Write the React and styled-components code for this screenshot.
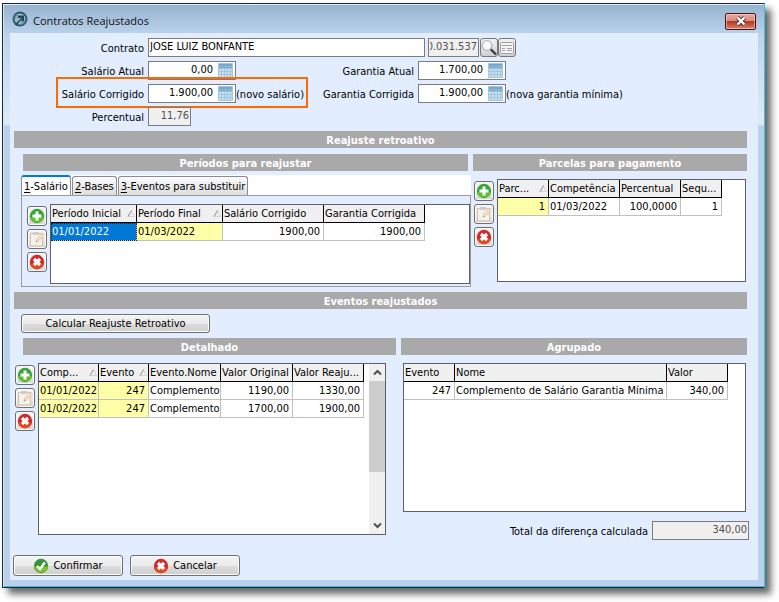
import React from "react";
import styled, { createGlobalStyle, css } from "styled-components";

const Global = createGlobalStyle`
  *, *::before, *::after { box-sizing: border-box; }
  body { margin: 0; background: #fff; }
  body, button, input, table {
    font-family: "DejaVu Sans Condensed", "DejaVu Sans", sans-serif;
    font-size: 11px;
    line-height: 14px;
    color: #000;
  }
`;

const Page = styled.div`
  min-height: 100vh;
  padding: 3px 14px 14px 2px;
  display: flex;
`;

const Window = styled.main`
  flex: 1;
  min-width: 0;
  display: flex;
  flex-direction: column;
  border: 1px solid #23262e;
  border-right-color: #2fc8ea;
  background: linear-gradient(#98b4d0 0, #bdd3eb 30px, #dfebf7 120px, #b9d1ea 122px);
  box-shadow: 6px 6px 7px rgba(0, 0, 0, 0.6), inset 0 1px 0 #d8f4fb, inset 1px 0 0 #c4eefb, inset 0 -1px 0 #2fc8ea;
  padding: 1px 6px 7px 7px;
`;

const TitleBar = styled.header`
  height: 28px;
  margin: 0 -6px 0 -6px;
  padding: 0 8px 0 8px;
  display: flex;
  align-items: center;
  gap: 5px;
  background: linear-gradient(#98b4d0, #b9d1ea);
`;

const Title = styled.h1`
  flex: 1;
  margin: 0;
  padding-top: 4px;
  font: 11px/18px "Open Sans", "Noto Sans", sans-serif;
  color: #111;
`;

const CloseButton = styled.button`
  width: 31px;
  height: 17px;
  padding: 0;
  margin-top: 4px;
  display: grid;
  place-items: center;
  border: 1px solid #43151c;
  border-radius: 2px;
  background: linear-gradient(#e9a99f 0%, #d98a7d 45%, #b83a24 50%, #c9604b 80%, #dc8f7c 100%);
  box-shadow: inset 0 0 0 1px rgba(255, 220, 210, 0.5);
`;

const Body = styled.div`
  flex: 1;
  padding: 5px 11px 4px 4px;
  background: #e2eeff;
`;

const Form = styled.form`
  margin: 0 0 5px -4px;
  display: flex;
  flex-direction: column;
  gap: 4px;
`;

const FormRow = styled.div`
  display: flex;
  gap: ${(p) => p.$gap || "0"};
`;

const Field = styled.div`
  position: relative;
  display: flex;
  align-items: center;
  width: ${(p) => (p.$wide ? "auto" : "304px")};
  white-space: nowrap;
  ${(p) =>
    p.$highlight &&
    css`
      &::after {
        content: "";
        position: absolute;
        inset: -7px 6px -5px 46px;
        border: 2px solid #ff6a00;
        pointer-events: none;
      }
    `}
`;

const Label = styled.label`
  width: ${(p) => p.$width};
  margin-right: 4px;
  padding-top: 2px;
  text-align: right;
`;

const Note = styled.span`
  padding-top: 2px;
`;

const TextBox = styled.input`
  width: ${(p) => p.$width};
  height: 19px;
  padding: 0 ${(p) => (p.$calc ? "22px" : "1px")} 2px 1px;
  border: 1px solid #7b7b80;
  border-radius: 0;
  outline: 0;
  background: #fff;
  text-align: ${(p) => (p.$number ? "right" : "left")};
  ${(p) => p.$clipStart && "direction: rtl; text-align: left;"}
  &:read-only {
    background: #f0f0f0;
    color: #505050;
  }
`;

const MoneyWrap = styled.span`
  position: relative;
  display: flex;
`;

const CalcMark = styled.svg`
  position: absolute;
  top: 2px;
  right: 3px;
`;

const LookupButton = styled.button`
  width: 18px;
  height: 19px;
  margin-left: ${(p) => (p.$first ? "1px" : "0")};
  padding: 0;
  display: grid;
  place-items: center;
  border: 1px solid #777;
  border-radius: 3px;
  background: linear-gradient(#f2f2f2, #e2e2e2 50%, #cfcfcf);
`;

const Bar = styled.h2`
  margin: ${(p) => p.$margin || "0"};
  height: 17px;
  background: #a9a9a9;
  color: #fff;
  font-size: 11px;
  line-height: 20px;
  font-weight: bold;
  text-align: center;
`;

const Columns = styled.div`
  display: grid;
  grid-template-columns: ${(p) => p.$columns};
  column-gap: 5px;
`;

const Panel = styled.section`
  min-width: 0;
  display: flex;
  flex-direction: column;
`;

const TabsBox = styled.div`
  margin: 4px -3px 0 7px;
`;

const TabList = styled.div`
  height: 20px;
  display: flex;
  align-items: flex-end;
  gap: 1px;
  background: #fff;
`;

const Tab = styled.button`
  height: 19px;
  padding: 1px 2px 0;
  white-space: nowrap;
  border: 1px solid #898c95;
  border-bottom: 0;
  border-radius: 3px 3px 0 0;
  background: linear-gradient(#fcfcfc, #ececec 50%, #dddddd);
  ${(p) =>
    p.$active &&
    css`
      height: 20px;
      border-top: 2px solid #0078d7;
      background: #fff;
    `}
  u {
    text-underline-offset: 2px;
  }
`;

const TabPanel = styled.div`
  height: 92px;
  padding: 8px 0 2px 5px;
  border: 1px solid #9a9a9a;
`;

const Workspace = styled.div`
  height: 100%;
  display: flex;
  gap: 3px;
`;

const Spaced = styled.div`
  height: ${(p) => p.$height};
  margin: 8px ${(p) => p.$right || "1px"} 0 ${(p) => p.$left || "1px"};
`;

const Tools = styled.div`
  padding-top: 2px;
  display: flex;
  flex-direction: column;
  gap: 3px;
`;

const ToolButton = styled.button`
  width: 20px;
  height: 20px;
  padding: 0;
  display: grid;
  place-items: center;
  border: 1px solid #6f6f6f;
  border-radius: 3px;
  background: linear-gradient(#f4f4f4, #ebebeb 50%, #d4d4d4);
  box-shadow: inset 0 0 0 1px #fafafa;
`;

const GridBox = styled.div`
  flex: 1;
  min-width: 0;
  height: 100%;
  display: flex;
  justify-content: space-between;
  overflow: hidden;
  border: 1px solid #5f6066;
  background: #fff;
`;

const Table = styled.table`
  align-self: flex-start;
  width: ${(p) => p.$width}px;
  flex: none;
  table-layout: fixed;
  border-collapse: separate;
  border-spacing: 0;
`;

const Th = styled.th`
  height: 18px;
  padding: 0 0 0 1px;
  border-right: 1px solid #000;
  border-bottom: 1px solid #000;
  background: #f0f0f0;
  font-weight: normal;
  text-align: left;
  white-space: nowrap;
  overflow: hidden;
`;

const HeadLine = styled.span`
  display: flex;
  align-items: center;
  justify-content: space-between;
`;

const Td = styled.td`
  height: 18px;
  padding: 0 ${(p) => (p.$right ? "3px" : "0")} 0 1px;
  border-right: 1px solid #c0c0c0;
  border-bottom: 1px solid #c0c0c0;
  background: ${(p) => (p.$key ? "#ffffa8" : "#fff")};
  text-align: ${(p) => (p.$right ? "right" : "left")};
  white-space: nowrap;
  overflow: hidden;
  ${(p) =>
    p.$selected &&
    css`
      background: #0078d7;
      color: #fff;
      outline: 1px dotted #10253c;
      outline-offset: -1px;
    `}
`;

const ScrollBar = styled.div`
  width: 16px;
  display: flex;
  flex-direction: column;
  background: #f0f0f0;
`;

const ScrollArrow = styled.button`
  height: 17px;
  padding: 0;
  display: grid;
  place-items: center;
  border: 0;
  background: #f0f0f0;
`;

const ScrollThumb = styled.div`
  height: 91px;
  margin-bottom: auto;
  background: #cdcdcd;
`;

const PushButton = styled.button`
  width: ${(p) => p.$width};
  height: ${(p) => p.$height};
  padding: 0;
  display: flex;
  align-items: center;
  justify-content: center;
  gap: 4px;
  border: 1px solid #707070;
  border-radius: 3px;
  background: linear-gradient(#f3f3f3, #ebebeb 50%, #dcdcdc 51%, #cfcfcf);
  box-shadow: inset 0 0 0 1px #fbfbfb;
`;

const CalcRow = styled.div`
  margin-left: 7px;
`;

const TotalRow = styled.div`
  margin: 9px -2px 0 0;
  display: flex;
  justify-content: flex-end;
  align-items: center;
`;

const Footer = styled.footer`
  margin: 15px 0 0 -1px;
  display: flex;
  gap: 7px;
`;

const AppIcon = () => (
  <svg width="16" height="16" viewBox="0 0 16 16" aria-hidden="true">
    <circle cx="8" cy="8" r="6.5" fill="#9dbccb" stroke="#2c5a6c" strokeWidth="2" />
    <path d="M3 8a5 5 0 0 1 3-4.500M13 8.500A5 5 0 0 1 9 13" fill="none" stroke="#5f93a5" strokeWidth="1.500" />
    <path d="M2.500 13.500 9 7H5.500L6.500 4.500H12V10l-2.300 1V8.500L4.500 14.500Z" fill="#1d4354" />
    <path d="m4 12.500 6-6" stroke="#7fabb9" strokeWidth=".6" />
  </svg>
);

const CloseIcon = () => (
  <svg width="12" height="10" viewBox="0 0 12 10" aria-hidden="true">
    <path d="M2.500 1.500 9.500 8.500M9.500 1.500 2.500 8.500" stroke="#4a3540" strokeWidth="4" />
    <path d="M2.500 1.500 9.500 8.500M9.500 1.500 2.500 8.500" stroke="#fff" strokeWidth="2.300" />
  </svg>
);

const CalcIcon = () => (
  <CalcMark width="15" height="15" viewBox="0 0 15 15" aria-hidden="true">
    <rect width="15" height="15" rx="1" fill="#a3c6e0" />
    <rect x="1" y="1" width="13" height="4" fill="#77a6cc" />
    <path d="M1 3.500h13" stroke="#93bbdb" />
    <g fill="#c9e0f0">
      {[6, 9, 12].map((y) =>
        [1, 4, 7, 10, 13].map((x) => <rect key={`${x}-${y}`} x={x} y={y} width={x === 13 ? 1 : 2} height="2" />)
      )}
    </g>
  </CalcMark>
);

const LensIcon = () => (
  <svg width="16" height="17" viewBox="0 0 16 17" aria-hidden="true">
    <path d="m9.500 10 5.500 5.500" stroke="#3c3c3c" strokeWidth="2.400" />
    <circle cx="6" cy="6.500" r="4.800" fill="#f7fafc" stroke="#b4b8bc" strokeWidth="1.300" />
    <path d="M3.500 5.500a3 3 0 0 1 3-2.300" fill="none" stroke="#fff" strokeWidth="1.500" />
  </svg>
);

const CardIcon = () => (
  <svg width="16" height="15" viewBox="0 0 16 15" aria-hidden="true">
    <rect x="1.500" y="2.500" width="13" height="11" rx="1" fill="#f4f4f4" stroke="#a0a0a0" />
    <path d="M3 5.500h10M3 8.500h3M3 10.500h3M8 8.500h5M8 10.500h5" stroke="#a2a2a2" />
  </svg>
);

const AddIcon = () => (
  <svg width="16" height="16" viewBox="0 0 16 16" aria-hidden="true">
    <circle cx="8" cy="8" r="7.200" fill="#35a336" />
    <path d="M1 9a7.200 7.200 0 0 0 14 0Z" fill="#62bd2c" />
    <path d="M8 3.500v9M3.500 8h9" stroke="#fff" strokeWidth="3" />
  </svg>
);

const EditIcon = () => (
  <svg width="16" height="16" viewBox="0 0 16 16" aria-hidden="true">
    <rect x="1.500" y="2.500" width="12" height="12.500" fill="#f4f2ec" stroke="#d8c19c" />
    <rect x="4" y="1" width="6" height="3" fill="#cdcdcd" />
    <path d="m7 11 1-3 5.500-6 1.800 1.800-5.500 6Z" fill="#f9e2c2" stroke="#d3b896" strokeWidth=".7" />
    <path d="m7 11 .4-1.300 1 1Z" fill="#777" />
  </svg>
);

const DeleteIcon = () => (
  <svg width="16" height="16" viewBox="0 0 16 16" aria-hidden="true">
    <circle cx="8" cy="8" r="7.200" fill="#d22a2c" />
    <path d="M1.100 10a7.200 7.200 0 0 0 13.800 0Z" fill="#e3481f" />
    <path d="m5 5 6 6M11 5l-6 6" stroke="#fff" strokeWidth="3.200" />
  </svg>
);

const CheckIcon = () => (
  <svg width="16" height="16" viewBox="0 0 16 16" aria-hidden="true">
    <circle cx="8" cy="8" r="7.200" fill="#35933c" />
    <path d="M.900 8.500a7.200 7.200 0 0 0 14.200 0Z" fill="#7cc226" />
    <path d="m4 8 3 3.200L11.800 4.500" fill="none" stroke="#fff" strokeWidth="2.400" />
  </svg>
);

const SortIcon = () => (
  <svg width="9" height="8" viewBox="0 0 9 8" aria-hidden="true">
    <path d="M4.500 1 7.500 6.500H1" fill="none" stroke="#d4d4d4" />
    <path d="M1 6.500 4.500.5" fill="none" stroke="#8a8a8a" />
  </svg>
);

const Chevron = ({ down }) => (
  <svg width="9" height="7" viewBox="0 0 9 7" aria-hidden="true">
    <path d={down ? "M1 1.500 4.500 5 8 1.500" : "M1 5.500 4.500 2 8 5.500"} fill="none" stroke="#505050" strokeWidth="2" />
  </svg>
);

function MoneyField({ id, label, labelWidth, value, note, highlight, wide }) {
  return (
    <Field $highlight={highlight} $wide={wide}>
      <Label htmlFor={id} $width={labelWidth}>{label}</Label>
      <MoneyWrap>
        <TextBox id={id} defaultValue={value} $width="88px" $calc $number />
        <CalcIcon />
      </MoneyWrap>
      {note && <Note>{note}</Note>}
    </Field>
  );
}

function EditTools() {
  return (
    <Tools>
      <ToolButton type="button" aria-label="Incluir"><AddIcon /></ToolButton>
      <ToolButton type="button" aria-label="Editar"><EditIcon /></ToolButton>
      <ToolButton type="button" aria-label="Excluir"><DeleteIcon /></ToolButton>
    </Tools>
  );
}

function DataGrid({ label, columns, rows, selectFirst, scroll }) {
  const total = columns.reduce((sum, c) => sum + c.width, 0);
  return (
    <GridBox>
      <Table $width={total} aria-label={label}>
        <colgroup>
          {columns.map((c) => <col key={c.name} width={c.width} />)}
        </colgroup>
        <thead>
          <tr>
            {columns.map((c) => (
              <Th key={c.name} scope="col">
                {c.sorted ? <HeadLine>{c.name}<SortIcon /></HeadLine> : c.name}
              </Th>
            ))}
          </tr>
        </thead>
        <tbody>
          {rows.map((row, r) => (
            <tr key={r}>
              {row.map((cell, i) => (
                <Td key={i} $key={columns[i].sorted} $right={columns[i].right} $selected={selectFirst && r === 0 && i === 0}>
                  {cell}
                </Td>
              ))}
            </tr>
          ))}
        </tbody>
      </Table>
      {scroll && (
        <ScrollBar>
          <ScrollArrow type="button" aria-label="Subir"><Chevron /></ScrollArrow>
          <ScrollThumb />
          <ScrollArrow type="button" aria-label="Descer"><Chevron down /></ScrollArrow>
        </ScrollBar>
      )}
    </GridBox>
  );
}

const periodColumns = [
  { name: "Período Inicial", width: 86, sorted: true },
  { name: "Período Final", width: 86, sorted: true },
  { name: "Salário Corrigido", width: 101, right: true },
  { name: "Garantia Corrigida", width: 101, right: true },
];
const parcelColumns = [
  { name: "Parc...", width: 51, sorted: true, right: true },
  { name: "Competência", width: 71 },
  { name: "Percentual", width: 61, right: true },
  { name: "Sequ...", width: 41, right: true },
];
const detailColumns = [
  { name: "Comp...", width: 60, sorted: true },
  { name: "Evento", width: 50, sorted: true, right: true },
  { name: "Evento.Nome", width: 72 },
  { name: "Valor Original", width: 72, right: true },
  { name: "Valor Reaju...", width: 71, right: true },
];
const groupColumns = [
  { name: "Evento", width: 51, right: true },
  { name: "Nome", width: 212 },
  { name: "Valor", width: 61, right: true },
];

export default function App() {
  return (
    <>
      <Global />
      <Page>
        <Window>
          <TitleBar>
            <AppIcon />
            <Title>Contratos Reajustados</Title>
            <CloseButton type="button" aria-label="Fechar"><CloseIcon /></CloseButton>
          </TitleBar>
          <Body>
            <Form>
              <FormRow $gap="3px">
                <Field $wide>
                  <Label htmlFor="contrato" $width="134px">Contrato</Label>
                  <TextBox id="contrato" $width="277px" defaultValue="JOSE LUIZ BONFANTE" />
                </Field>
                <Field $wide>
                  <TextBox aria-label="Código do contrato" $width="51px" $clipStart readOnly value="0.031.537" />
                  <LookupButton type="button" aria-label="Pesquisar" $first><LensIcon /></LookupButton>
                  <LookupButton type="button" aria-label="Detalhes"><CardIcon /></LookupButton>
                </Field>
              </FormRow>
              <FormRow>
                <MoneyField id="salario-atual" label="Salário Atual" labelWidth="134px" value="0,00" />
                <MoneyField id="garantia-atual" label="Garantia Atual" labelWidth="100px" value="1.700,00" wide />
              </FormRow>
              <FormRow>
                <MoneyField id="salario-corrigido" label="Salário Corrigido" labelWidth="134px" value="1.900,00" note="(novo salário)" highlight />
                <MoneyField id="garantia-corrigida" label="Garantia Corrigida" labelWidth="100px" value="1.900,00" note="(nova garantia mínima)" wide />
              </FormRow>
              <FormRow>
                <Field $wide>
                  <Label htmlFor="percentual" $width="134px">Percentual</Label>
                  <TextBox id="percentual" $width="43px" $number readOnly value="11,76" />
                </Field>
              </FormRow>
            </Form>

            <Bar>Reajuste retroativo</Bar>
            <Columns $columns="minmax(0, 454fr) minmax(0, 274fr)">
              <Panel>
                <Bar as="h3" $margin="6px 0 0 9px">Períodos para reajustar</Bar>
                <TabsBox>
                  <TabList role="tablist">
                    <Tab type="button" role="tab" aria-selected="true" $active><u>1</u>-Salário</Tab>
                    <Tab type="button" role="tab" aria-selected="false"><u>2</u>-Bases</Tab>
                    <Tab type="button" role="tab" aria-selected="false"><u>3</u>-Eventos para substituir</Tab>
                  </TabList>
                  <TabPanel role="tabpanel">
                    <Workspace>
                      <EditTools />
                      <DataGrid
                        label="Períodos para reajustar"
                        columns={periodColumns}
                        rows={[["01/01/2022", "01/03/2022", "1900,00", "1900,00"]]}
                        selectFirst
                      />
                    </Workspace>
                  </TabPanel>
                </TabsBox>
              </Panel>
              <Panel>
                <Bar as="h3" $margin="6px 0 0">Parcelas para pagamento</Bar>
                <Spaced $height="103px">
                  <Workspace>
                    <EditTools />
                    <DataGrid
                      label="Parcelas para pagamento"
                      columns={parcelColumns}
                      rows={[["1", "01/03/2022", "100,0000", "1"]]}
                    />
                  </Workspace>
                </Spaced>
              </Panel>
            </Columns>

            <Bar $margin="5px 0">Eventos reajustados</Bar>
            <CalcRow>
              <PushButton type="button" $width="189px" $height="19px">Calcular Reajuste Retroativo</PushButton>
            </CalcRow>

            <Columns $columns="minmax(0, 382fr) minmax(0, 346fr)">
              <Panel>
                <Bar as="h3" $margin="5px 0 0 9px">Detalhado</Bar>
                <Spaced $height="172px" $right="10px">
                  <Workspace>
                    <EditTools />
                    <DataGrid
                      label="Detalhado"
                      columns={detailColumns}
                      rows={[
                        ["01/01/2022", "247", "Complemento", "1190,00", "1330,00"],
                        ["01/02/2022", "247", "Complemento", "1700,00", "1900,00"],
                      ]}
                      scroll
                    />
                  </Workspace>
                </Spaced>
              </Panel>
              <Panel>
                <Bar as="h3" $margin="5px 0 0">Agrupado</Bar>
                <Spaced $height="149px" $left="2px">
                  <DataGrid
                    label="Agrupado"
                    columns={groupColumns}
                    rows={[["247", "Complemento de Salário Garantia Mínima", "340,00"]]}
                  />
                </Spaced>
                <TotalRow>
                  <Label htmlFor="total" $width="auto">Total da diferença calculada</Label>
                  <TextBox id="total" $width="97px" $number readOnly value="340,00" />
                </TotalRow>
              </Panel>
            </Columns>

            <Footer>
              <PushButton type="button" $width="110px" $height="21px"><CheckIcon />Confirmar</PushButton>
              <PushButton type="button" $width="110px" $height="21px"><DeleteIcon />Cancelar</PushButton>
            </Footer>
          </Body>
        </Window>
      </Page>
    </>
  );
}
